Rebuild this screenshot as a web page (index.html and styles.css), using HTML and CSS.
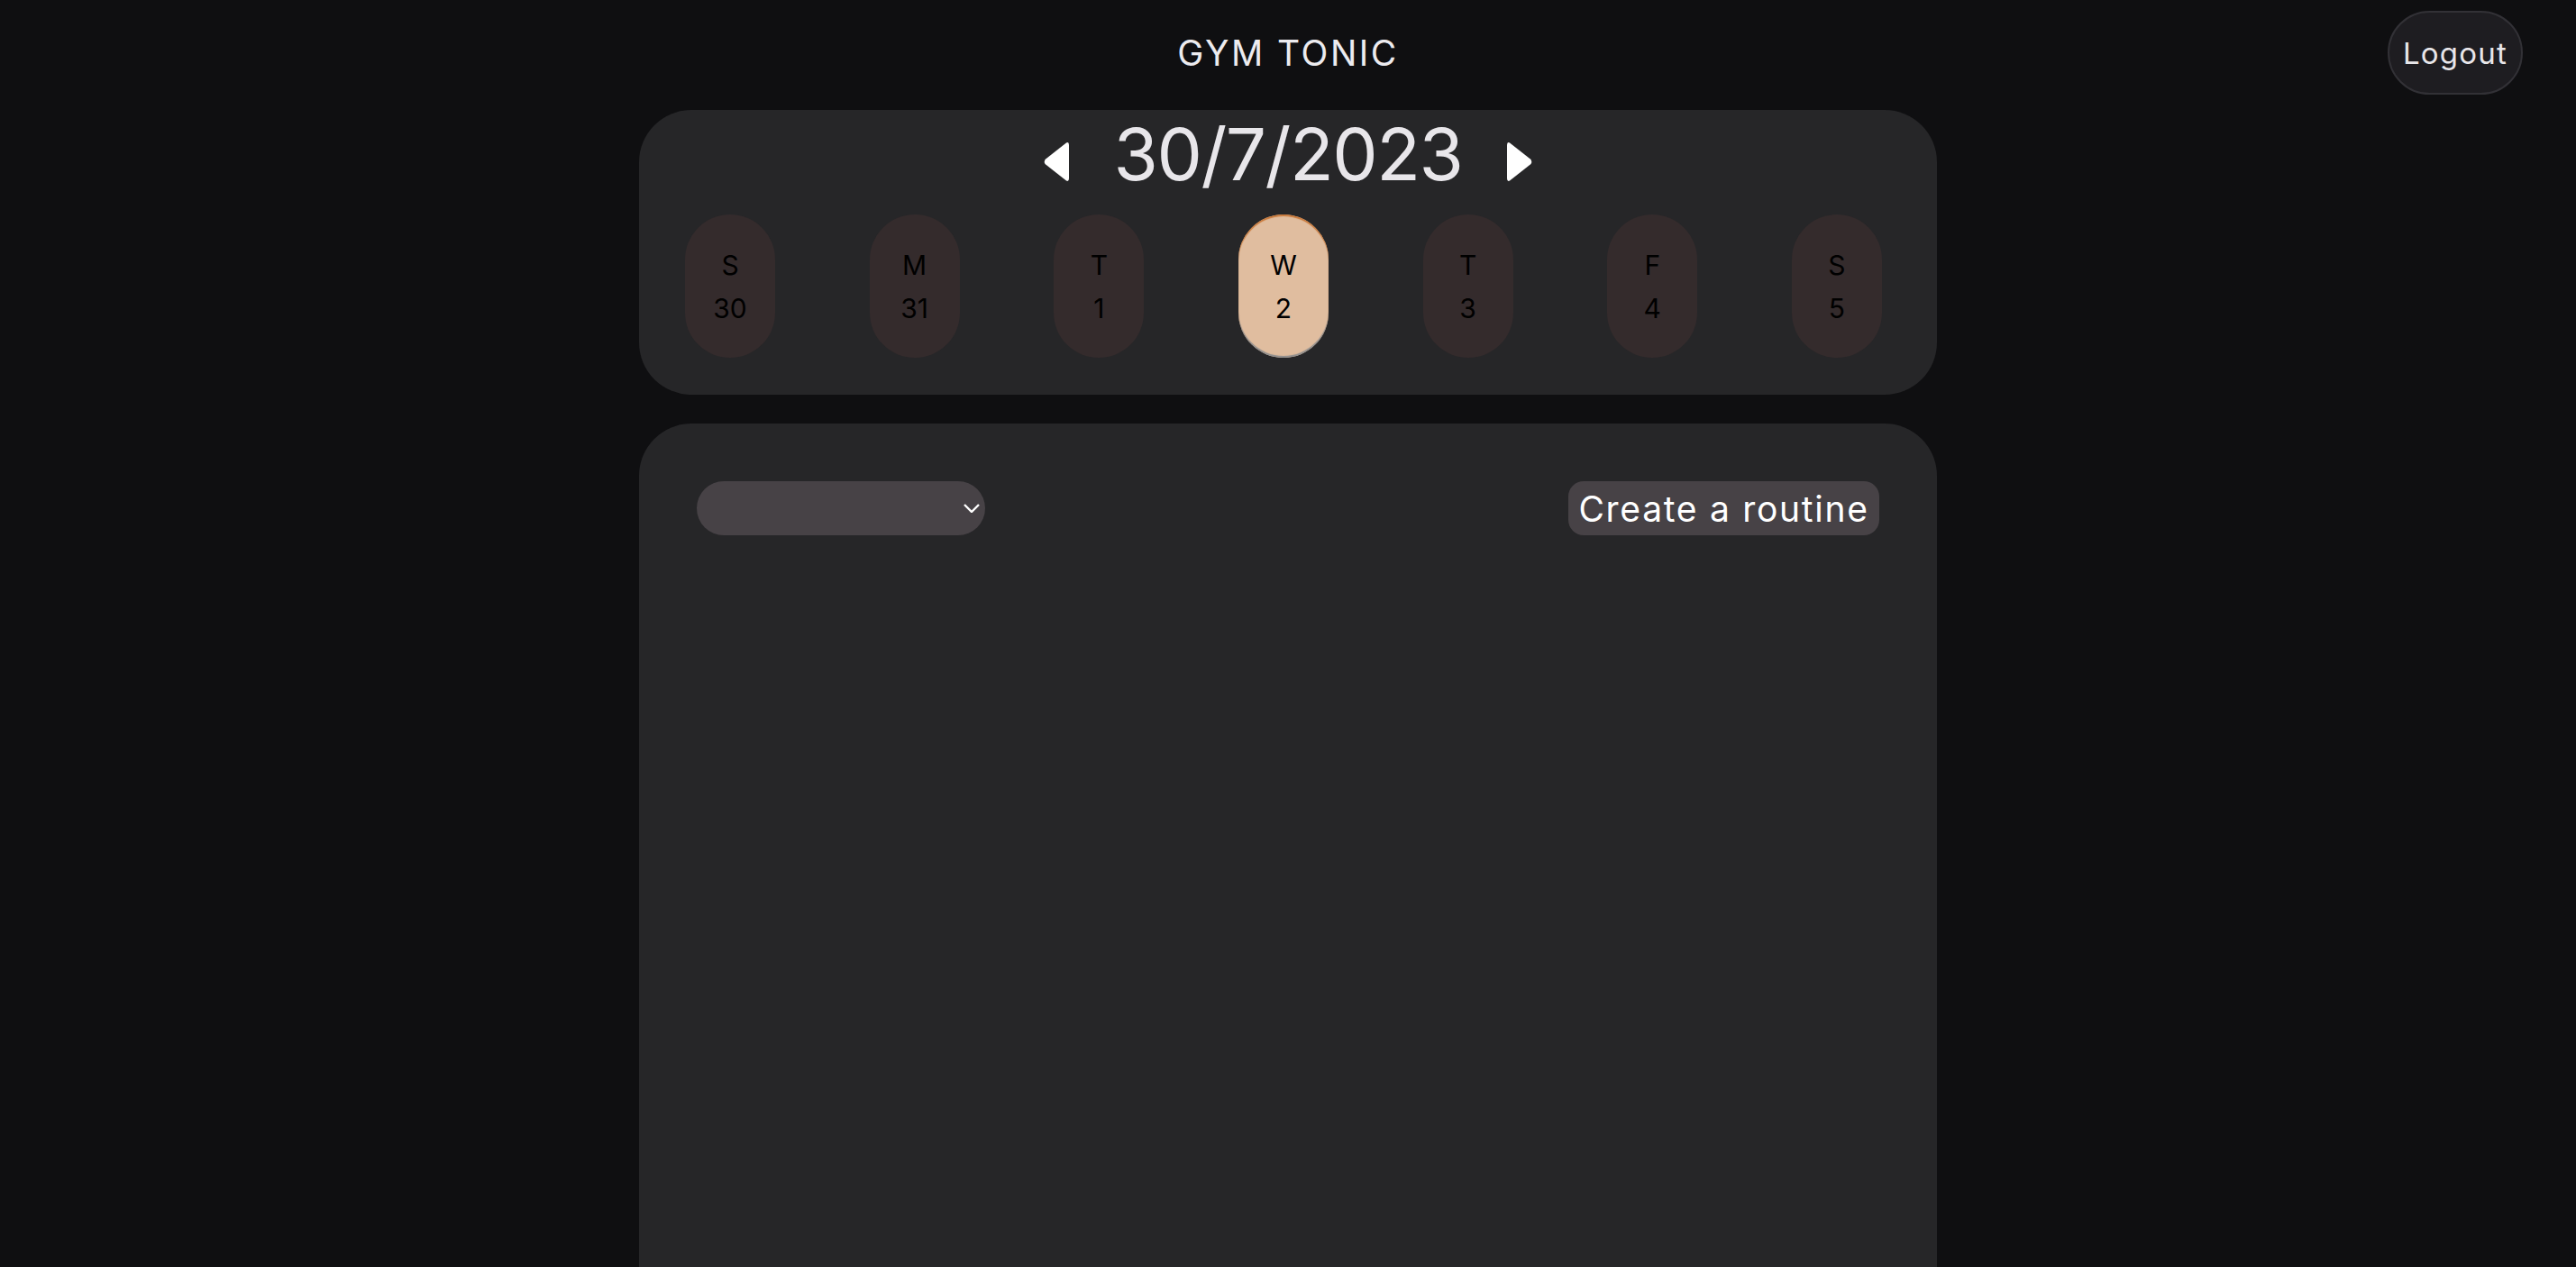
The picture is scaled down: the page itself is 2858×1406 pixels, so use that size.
FILE: index.html
```html
<!DOCTYPE html>
<html lang="en">
<head>
<meta charset="utf-8">
<title>Gym Tonic</title>
<link rel="stylesheet" href="styles.css">
</head>
<body>
<header class="topbar">
  <div class="topbar-side"></div>
  <h1 class="brand">GYM TONIC</h1>
  <div class="topbar-side topbar-right">
    <button class="logout">Logout</button>
  </div>
</header>
<main class="main">
  <section class="week-panel">
    <div class="date-row">
      <button class="arrow" aria-label="Previous">
        <svg width="28" height="45" viewBox="0 0 28 45"><path d="M25 1.5 Q28 0 28 4 V41 Q28 45 25 43.5 L1.5 25 Q0 22.5 1.5 20 Z" fill="#fff"/></svg>
      </button>
      <div class="date">30/7/2023</div>
      <button class="arrow" aria-label="Next">
        <svg width="28" height="45" viewBox="0 0 28 45"><path d="M3 1.5 Q0 0 0 4 V41 Q0 45 3 43.5 L26.5 25 Q28 22.5 26.5 20 Z" fill="#fff"/></svg>
      </button>
    </div>
    <div class="days">
      <div class="day"><span>S</span><span>30</span></div>
      <div class="day"><span>M</span><span>31</span></div>
      <div class="day"><span>T</span><span>1</span></div>
      <div class="day day-active"><span>W</span><span>2</span></div>
      <div class="day"><span>T</span><span>3</span></div>
      <div class="day"><span>F</span><span>4</span></div>
      <div class="day"><span>S</span><span>5</span></div>
    </div>
  </section>
  <section class="routine-panel">
    <div class="routine-bar">
      <div class="select">
        <svg width="18" height="10" viewBox="0 0 18 10"><polyline points="1,1 9,9 17,1" fill="none" stroke="#fff" stroke-width="2.4"/></svg>
      </div>
      <button class="create">Create a routine</button>
    </div>
  </section>
</main>
</body>
</html>
```
FILE: styles.css
```css
* { box-sizing: border-box; }
html, body { margin: 0; padding: 0; }
body {
  background: #0f0f11;
  font-family: Inter, "Open Sans", sans-serif;
  color: #ecebef;
  height: 1406px;
  overflow: hidden;
}
button { font-family: inherit; cursor: pointer; }

.topbar {
  display: grid;
  grid-template-columns: 1fr auto 1fr;
  align-items: center;
  padding: 12px 0 17px;
}
.topbar-right { display: flex; justify-content: flex-end; padding-right: 59px; }
.brand {
  margin: 0;
  font-size: 39px;
  font-weight: 400;
  letter-spacing: 2.5px;
  color: #ecebef;
}
.logout {
  width: 150px;
  height: 93px;
  border-radius: 47px;
  border: 2px solid #323136;
  background: #1e1d21;
  color: #e8e6ea;
  font-size: 33px;
  letter-spacing: 1.2px;
  padding: 0;
}

.main { width: 1440px; margin: 0 auto; }

.week-panel {
  background: #262628;
  border-radius: 58px;
  height: 316px;
  padding-top: 9px;
}
.date-row {
  display: flex;
  justify-content: center;
  align-items: flex-start;
  gap: 50px;
  height: 80px;
}
.arrow {
  background: none;
  border: 0;
  padding: 0;
  margin-top: 26px;
  display: flex;
}
.date {
  font-size: 80px;
  line-height: 80px;
  color: #e8e6ea;
  letter-spacing: -1.5px;
}
.days {
  display: flex;
  justify-content: space-between;
  padding: 0 61px 0 51px;
  margin-top: 27px;
}
.day {
  width: 100px;
  height: 159px;
  border-radius: 50px;
  background: #342b2c;
  display: flex;
  flex-direction: column;
  justify-content: center;
  align-items: center;
  color: #000;
  font-size: 30px;
  line-height: 48px;
}
.day-active {
  background: #e0bd9f;
  box-shadow: inset 0 2px 1px #c9793a, inset 0 -2px 1px #8d8c8c;
}

.routine-panel {
  margin-top: 32px;
  background: #262628;
  border-radius: 58px 58px 0 0;
  height: 1000px;
  padding: 64px;
}
.routine-bar {
  display: flex;
  justify-content: space-between;
  align-items: center;
}
.select {
  width: 320px;
  height: 60px;
  border-radius: 30px;
  background: #474246;
  display: flex;
  justify-content: flex-end;
  align-items: center;
  padding-right: 6px;
}
.create {
  height: 60px;
  width: 345px;
  border: 0;
  border-radius: 17px;
  background: #474246;
  color: #fff;
  font-size: 39px;
  letter-spacing: 1.7px;
  padding: 0;
}
```
